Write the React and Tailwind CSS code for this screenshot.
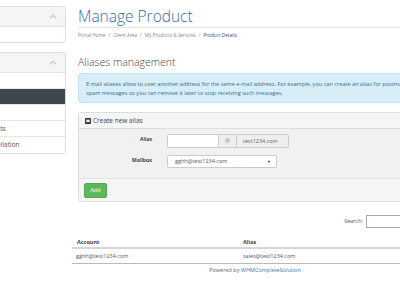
import React from "react";

const font = { fontFamily: '"Open Sans", "Liberation Sans", sans-serif' };

// sidebar list entries (names clipped by the viewport, as in the shot)
const menuRows = [
  { label: "", active: false, pad: "pl-[55px]" },
  { label: "", active: true, pad: "pl-[55px]" },
  { label: "", active: false, pad: "pl-[55px]" },
  { label: "Manage Accounts", active: false, pad: "pl-[51px]" },
  { label: "Request Cancellation", active: false, pad: "pl-[55px]" },
];

const ChevronUp = () => (
  <svg width="8" height="5" viewBox="0 0 8 5" fill="none">
    <path d="M1 4.2 4 1.2l3 3" stroke="#c8c8c8" strokeWidth="1.3" />
  </svg>
);

const SidePanel = ({ children }) => (
  <div className="border border-[#dddddd] rounded-[3px] bg-white overflow-hidden">
    <div className="h-[20px] bg-[#f5f5f5] border-b border-[#e3e3e3] flex items-center justify-end pr-[8px]">
      <ChevronUp />
    </div>
    {children}
  </div>
);

const Sidebar = () => (
  <div className="w-[66px] shrink-0 overflow-hidden pt-[6px]">
    <div className="w-[166px] ml-[-100px] flex flex-col gap-[9px]">
      <SidePanel>
        <div className="h-[15px]" />
      </SidePanel>
      <SidePanel>
        {menuRows.map((row, i) => (
          <div
            key={i}
            className={`h-[16px] flex items-center ${row.pad} text-[6.5px] whitespace-nowrap border-b border-[#e6e6e6] last:border-b-0 ${
              row.active ? "bg-[#3e474f] text-white" : "text-[#555]"
            }`}
          >
            {row.label}
          </div>
        ))}
      </SidePanel>
    </div>
  </div>
);

const Breadcrumb = () => (
  <div className="flex items-center gap-[3px] text-[4.7px] text-[#888] mt-[4px] whitespace-nowrap">
    <span>Portal Home</span>
    <span>/</span>
    <span>Client Area</span>
    <span>/</span>
    <span>My Products &amp; Services</span>
    <span>/</span>
    <span className="text-[#3a4a5a]">Product Details</span>
  </div>
);

const CreateAlias = () => (
  <div className="mt-[9px] border border-[#dddddd] rounded-[3px] overflow-hidden">
    <div className="h-[16px] bg-[#f5f5f5] border-b border-[#dddddd] flex items-center gap-[2px] pl-[6px] text-[6.5px] text-[#444]">
      <svg width="6" height="6" viewBox="0 0 6 6">
        <rect x="0" y="0" width="6" height="6" rx="0.8" fill="#333" />
        <rect x="1.2" y="1.6" width="3.6" height="2.6" fill="#e8e8e8" />
      </svg>
      <span>Create new alias</span>
    </div>
    <div className="bg-[#f1f1f1] border-b border-[#e2e2e2] h-[50px] pt-[5px] flex flex-col gap-[7px]">
      <div className="flex items-start">
        <div className="w-[73px] text-right text-[5px] font-bold text-[#444] pt-[2px]">Alias</div>
        <div className="ml-[15px] flex h-[14px]">
          <div className="w-[52px] bg-white border border-[#cccccc] rounded-l-[2px]" />
          <div className="w-[17px] bg-[#eeeeee] border-y border-[#cccccc] flex items-center justify-center text-[5px] text-[#888]">
            @
          </div>
          <div className="w-[53px] bg-[#eeeeee] border border-[#cccccc] rounded-r-[2px] flex items-center pl-[6px] text-[5.5px] text-[#666]">
            test1234.com
          </div>
        </div>
      </div>
      <div className="flex items-start">
        <div className="w-[73px] text-right text-[5px] font-bold text-[#444] pt-[2px]">Mailbox</div>
        <div className="ml-[15px] w-[110px] h-[13px] bg-white border border-[#cccccc] rounded-[2px] flex items-center justify-between pl-[7px] pr-[5px] text-[5.5px] text-[#555]">
          <span>gghh@test1234.com</span>
          <span className="text-[4px] text-[#333]">▼</span>
        </div>
      </div>
    </div>
    <div className="h-[22px] bg-[#f5f5f5] flex items-center pl-[5px]">
      <button className="w-[23px] h-[15px] bg-[#5cb85c] border border-[#4cae4c] rounded-[2px] text-white text-[5.5px]">
        Add
      </button>
    </div>
  </div>
);

const AliasTable = () => (
  <div className="mt-[13px]">
    <div className="flex justify-end items-center gap-[3px] text-[5.5px] text-[#555]">
      <span>Search:</span>
      <div className="w-[66px] h-[13px] border border-[#aaaaaa] bg-white" />
    </div>
    <div className="ml-[-6px] mt-[10px] text-[5.5px] text-[#444]">
      <div className="flex h-[11px] items-center border-b-2 border-[#d6d6d6] font-bold pl-[5px]">
        <span className="w-[166px]">Account</span>
        <span>Alias</span>
      </div>
      <div className="flex h-[15px] items-center border-b border-[#bbbbbb] text-[#555] pl-[4px]">
        <span className="w-[167px]">gghh@test1234.com</span>
        <span>sales@test1234.com</span>
      </div>
    </div>
    <div className="text-center text-[5.5px] text-[#666] mt-[2px]">
      Powered by <span className="text-[#337ab7]">WHMCompleteSolution</span>
    </div>
  </div>
);

export default function App() {
  return (
    <div className="w-[400px] h-[284px] overflow-hidden bg-white flex" style={font}>
      <Sidebar />
      <div className="ml-[12px] w-[354px] shrink-0 pt-[5px]">
        <h1 className="text-[15.5px] font-light text-[#2f6ea4] leading-[22px] border-b border-[#e4e4e4]">
          Manage Product
        </h1>
        <Breadcrumb />
        <h2 className="mt-[17px] text-[10.5px] font-light text-[#444] leading-[13px]">Aliases management</h2>
        <div className="mt-[4px] bg-[#d9edf7] border border-[#bce8f1] rounded-[3px] h-[30px] pl-[7px] pt-[6px] text-[5.6px] leading-[9px] text-[#31708f] whitespace-nowrap">
          <div>
            E-mail aliases allow to user another address for the same e-mail address. For example, you can create an alias for postmaster
          </div>
          <div>spam messages so you can remove it later to stop receiving such messages.</div>
        </div>
        <CreateAlias />
        <AliasTable />
      </div>
    </div>
  );
}
